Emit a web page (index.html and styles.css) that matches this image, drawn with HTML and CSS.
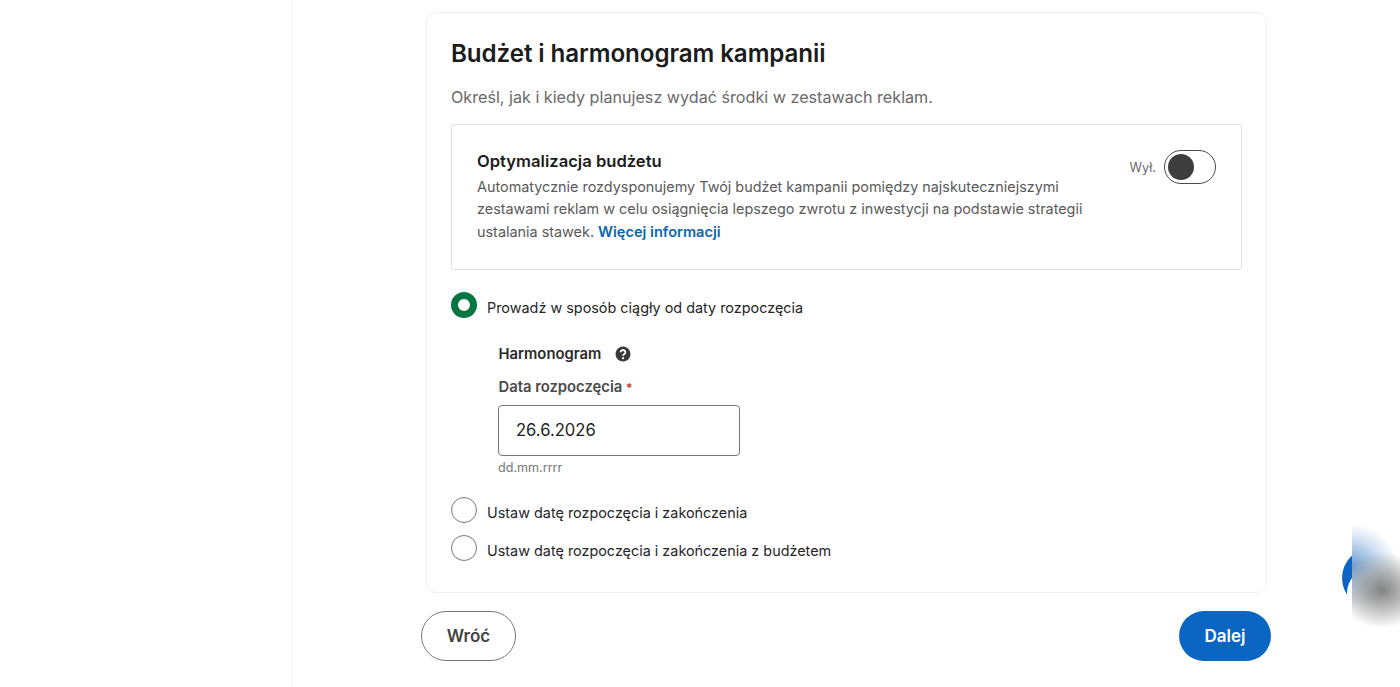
FILE: index.html
```html
<!DOCTYPE html>
<html lang="pl">
<head>
<meta charset="utf-8">
<title>Budżet i harmonogram kampanii</title>
<link rel="stylesheet" href="styles.css">
</head>
<body>
<div class="app">
  <aside class="sidebar"></aside>
  <main class="main">
    <section class="card">
      <h1 class="title">Budżet i harmonogram kampanii</h1>
      <p class="subtitle">Określ, jak i kiedy planujesz wydać środki w zestawach reklam.</p>
      <div class="opt">
        <div class="opt-text">
          <h2 class="opt-title">Optymalizacja budżetu</h2>
          <p class="opt-desc">Automatycznie rozdysponujemy Twój budżet kampanii pomiędzy najskuteczniejszymi zestawami reklam w celu osiągnięcia lepszego zwrotu z inwestycji na podstawie strategii ustalania stawek. <a class="link" href="#">Więcej informacji</a></p>
        </div>
        <div class="toggle-wrap">
          <span class="toggle-label">Wył.</span>
          <span class="toggle"><span class="knob"></span></span>
        </div>
      </div>
      <div class="radio-row first">
        <span class="radio checked"></span>
        <span class="radio-label">Prowadź w sposób ciągły od daty rozpoczęcia</span>
      </div>
      <div class="schedule">
        <div class="sched-head">
          <span class="sched-title">Harmonogram</span>
          <svg class="help" viewBox="0 0 16 16" width="16" height="16" aria-hidden="true">
            <circle cx="8" cy="8" r="7.5" fill="#3a3a3a"/>
            <path d="M5.6 6.2a2.4 2.2 0 1 1 3.7 1.9c-.8.5-1.3.9-1.3 1.7" fill="none" stroke="#fff" stroke-width="1.8"/>
            <circle cx="8" cy="12.2" r="1.1" fill="#fff"/>
          </svg>
        </div>
        <label class="field-label">Data rozpoczęcia <span class="req">*</span></label>
        <div class="date-input">26.6.2026</div>
        <div class="hint">dd.mm.rrrr</div>
      </div>
      <div class="radio-row second">
        <span class="radio"></span>
        <span class="radio-label">Ustaw datę rozpoczęcia i zakończenia</span>
      </div>
      <div class="radio-row third">
        <span class="radio"></span>
        <span class="radio-label">Ustaw datę rozpoczęcia i zakończenia z budżetem</span>
      </div>
    </section>
    <div class="actions">
      <button class="btn btn-back">Wróć</button>
      <button class="btn btn-next">Dalej</button>
    </div>
  </main>
</div>
<div class="chat-circle"></div>
<div class="blur-patch"></div>
</body>
</html>
```
FILE: styles.css
```css
* { box-sizing: border-box; }
html, body { margin: 0; height: 100%; overflow: hidden; background: #fff; }
body { font-family: Inter, "Liberation Sans", sans-serif; color: #1b1b1b; }
.app { display: flex; height: 687px; }
.sidebar { width: 293px; flex: none; border-right: 1px solid #f3f3f3; }
.main { width: 850px; margin-left: 128px; padding-top: 12px; }
.card { margin: 0 4px 0 5px; height: 581px; border: 1px solid #f0f0f0; border-radius: 10px; padding: 0 24px; }
.title { margin: 24px 0 0; font-size: 24.2px; line-height: 34px; font-weight: 600; color: #1c1c1c; letter-spacing: -0.1px; }
.subtitle { margin: 13px 0 0; font-size: 16.15px; line-height: 26px; color: #6a6a6a; }
.opt { display: flex; justify-content: space-between; margin-top: 14px; height: 146px; border: 1px solid #e0e0e0; border-radius: 3px; padding: 24px 25px 0 25px; }
.opt-text { width: 620px; }
.opt-title { margin: 0; font-size: 16.6px; line-height: 24px; font-weight: 600; color: #1c1c1c; }
.opt-desc { margin: 3px 0 0; font-size: 14.4px; line-height: 22.4px; color: #5a5a5a; }
.link { color: #0a66b2; font-size: 14.6px; font-weight: 600; text-decoration: none; }
.toggle-wrap { display: flex; align-items: center; gap: 8px; height: 36px; }
.toggle-label { font-size: 12.7px; color: #6a6a6a; }
.toggle { display: flex; align-items: center; width: 52px; height: 34px; border: 1.5px solid #4a4a4a; border-radius: 17px; padding-left: 3px; background: #fff; }
.knob { width: 26px; height: 26px; border-radius: 50%; background: #3d3d3d; }
.radio-row { display: flex; align-items: center; gap: 10px; height: 26px; }
.radio-row.first { margin-top: 22px; }
.radio-row.second { margin-top: 21px; }
.radio-row.third { margin-top: 12px; }
.radio { width: 26px; height: 26px; flex: none; border-radius: 50%; border: 1px solid #777; background: #fff; }
.radio.checked { border: 7px solid #057642; }
.radio-label { font-size: 14.4px; line-height: 26px; color: #262626; padding-top: 5px; }
.schedule { margin: 0 0 0 47px; padding-top: 24px; }
.sched-head { display: flex; align-items: center; gap: 14px; height: 24px; padding-left: 0.5px; }
.sched-title { font-size: 14.8px; font-weight: 600; color: #2a2a2a; }
.help { flex: none; }
.field-label { display: block; margin-top: 9px; padding-left: 0.5px; font-size: 14.8px; line-height: 24px; font-weight: 600; color: #4a4a4a; }
.req { color: #c0392b; font-size: 12px; }
.date-input { display: flex; align-items: center; margin-top: 5px; width: 241.5px; height: 51px; border: 1px solid #777; border-radius: 4px; padding: 0 0 2px 17px; font-size: 16.6px; color: #222; }
.hint { margin-top: 4px; font-size: 12.6px; line-height: 16px; color: #777; }
.actions { display: flex; justify-content: space-between; margin-top: 18px; }
.btn { height: 50px; border-radius: 25px; font-family: inherit; font-size: 17px; font-weight: 600; }
.btn-back { width: 95px; background: #fff; border: 1px solid #777; color: #444; }
.btn-next { width: 92px; background: #0a66c2; border: none; color: #fff; }
.chat-circle { position: absolute; left: 1342px; top: 548px; width: 60px; height: 60px; border-radius: 50%; background: #0a66c2; }
.chat-circle::after { content: ""; position: absolute; left: 5px; top: 20px; width: 50px; height: 50px; border-radius: 50%; background: #fff; }
.blur-patch { position: absolute; left: 1352px; top: 520px; width: 48px; height: 125px; background:
  radial-gradient(ellipse 46px 38px at 30px 70px, rgba(125,125,125,.95) 0%, rgba(155,155,155,.65) 50%, rgba(255,255,255,0) 100%),
  radial-gradient(ellipse 46px 42px at 0px 46px, rgba(85,140,205,.85) 0%, rgba(160,195,230,.55) 60%, rgba(255,255,255,0) 100%),
  #fff; }
```
